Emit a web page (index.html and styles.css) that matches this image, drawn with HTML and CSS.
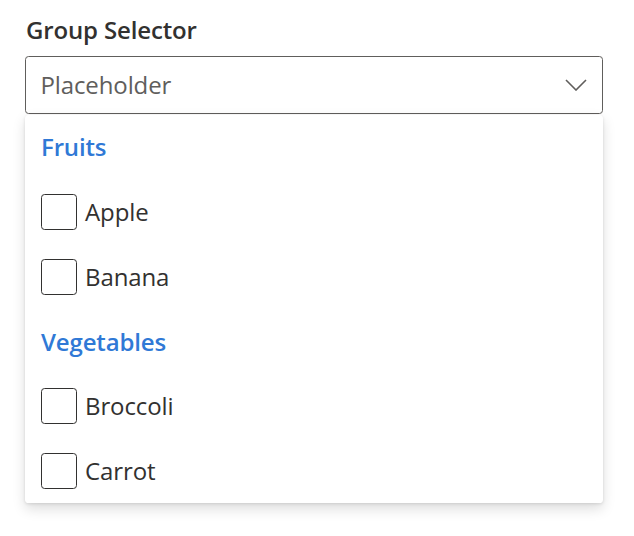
FILE: index.html
```html
<!DOCTYPE html>
<html lang="en">
<head>
<meta charset="utf-8">
<title>Group Selector</title>
<link rel="stylesheet" href="styles.css">
</head>
<body>
<div class="field">
  <label class="label">Group Selector</label>
  <div class="dropdown">
    <span class="placeholder">Placeholder</span>
    <svg class="chevron" width="22" height="12" viewBox="0 0 22 12" aria-hidden="true">
      <polyline points="1,1 11,11 21,1" fill="none" stroke="#605e5c" stroke-width="1.6"/>
    </svg>
  </div>
  <div class="callout">
    <div class="header">Fruits</div>
    <div class="option"><span class="box"></span><span class="text">Apple</span></div>
    <div class="option"><span class="box"></span><span class="text">Banana</span></div>
    <div class="header">Vegetables</div>
    <div class="option"><span class="box"></span><span class="text">Broccoli</span></div>
    <div class="option"><span class="box"></span><span class="text">Carrot</span></div>
  </div>
</div>
</body>
</html>
```

FILE: styles.css
```css
html, body {
  margin: 0;
  padding: 0;
  background: #ffffff;
}
body {
  padding: 3px 0 33px 25px;
  font-family: "Open Sans", "Noto Sans", sans-serif;
  color: #323130;
}
.field {
  width: 578px;
  display: flex;
  flex-direction: column;
}
.label {
  display: block;
  font-size: 24px;
  font-weight: 600;
  line-height: 36px;
  letter-spacing: -0.15px;
  padding: 9px 0 8px 1px;
  color: #323130;
}
.dropdown {
  box-sizing: border-box;
  height: 57.6px;
  border: 1px solid #605e5c;
  border-radius: 3.6px;
  display: flex;
  align-items: center;
  justify-content: space-between;
  padding: 0 15px 0 14.4px;
}
.placeholder {
  font-size: 24px;
  line-height: 36px;
  letter-spacing: -0.1px;
  color: #605e5c;
}
.chevron {
  display: block;
}
.callout {
  margin-top: 1px;
  background: #ffffff;
  border-radius: 3.6px;
  box-shadow: 0 5.8px 13px rgba(0,0,0,0.132), 0 1px 3.2px rgba(0,0,0,0.108);
  display: flex;
  flex-direction: column;
}
.header {
  height: 64.8px;
  display: flex;
  align-items: center;
  padding: 0 16px;
  font-size: 24px;
  font-weight: 600;
  letter-spacing: -0.15px;
  color: #3079d6;
}
.option {
  height: 64.8px;
  display: flex;
  align-items: center;
  padding: 0 16px;
  gap: 8px;
  font-size: 24px;
  letter-spacing: -0.1px;
  color: #323130;
}
.box {
  box-sizing: border-box;
  width: 36px;
  height: 36px;
  border: 1px solid #323130;
  border-radius: 3.6px;
  flex: none;
}
.text {
  line-height: 36px;
}
```
